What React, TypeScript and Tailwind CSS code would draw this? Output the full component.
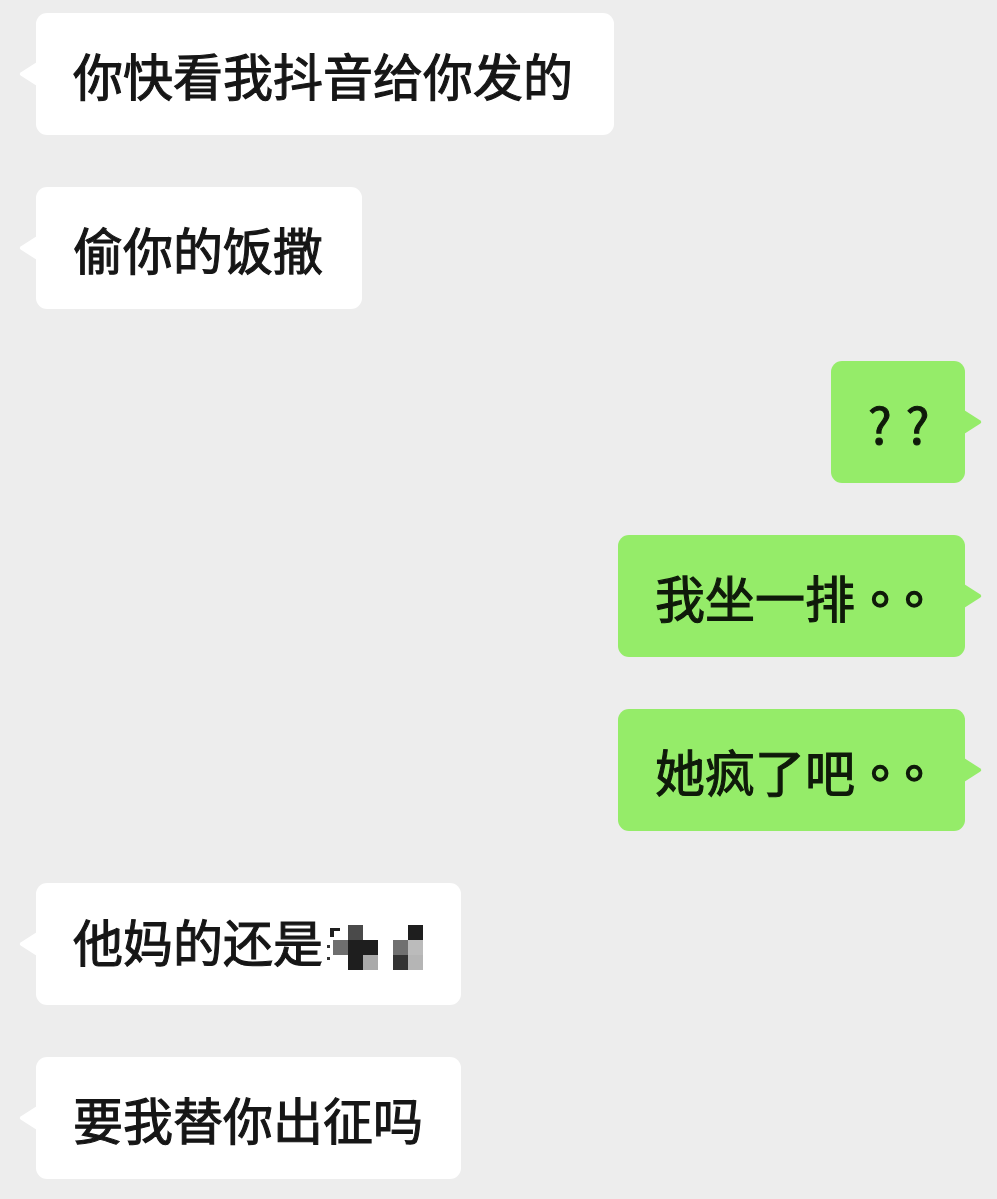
import React from "react";

const font = { fontFamily: '"Noto Sans CJK SC", "Noto Sans", sans-serif' };
const tcFont = { fontFamily: '"Noto Sans CJK TC", "Noto Sans CJK SC", sans-serif' };

function TailLeft() {
  return (
    <svg
      className="absolute left-[-18px] top-1/2 -translate-y-1/2"
      width="19"
      height="26"
      viewBox="0 0 19 26"
    >
      <path d="M19 1 L3 11.2 Q0.5 13 3 14.8 L19 25 Z" fill="#ffffff" />
    </svg>
  );
}

function TailRight() {
  return (
    <svg
      className="absolute right-[-18px] top-1/2 -translate-y-1/2"
      width="19"
      height="26"
      viewBox="0 0 19 26"
    >
      <path d="M0 1 L16 11.2 Q18.5 13 16 14.8 L0 25 Z" fill="#95ec69" />
    </svg>
  );
}

function Left({ children, w }: { children: React.ReactNode; w: string }) {
  return (
    <div className="flex justify-start pl-[36px]">
      <div
        className={`relative flex h-[122px] items-center rounded-[11px] bg-white pl-[37px] text-[50px] leading-none text-[#161616] ${w}`}
        style={font}
      >
        <TailLeft />
        <span className="whitespace-nowrap font-normal [-webkit-text-stroke:1.1px_#161616]">{children}</span>
      </div>
    </div>
  );
}

function Right({ children, w }: { children: React.ReactNode; w: string }) {
  return (
    <div className="flex justify-end pr-[32px]">
      <div
        className={`relative flex h-[122px] items-center rounded-[11px] bg-[#95ec69] pl-[37px] text-[50px] leading-none text-[#0f1a0a] ${w}`}
        style={font}
      >
        <TailRight />
        <span className="whitespace-nowrap font-normal [-webkit-text-stroke:1.1px_#0f1a0a]">{children}</span>
      </div>
    </div>
  );
}

function Dots() {
  return (
    <span style={tcFont} className="[-webkit-text-stroke:1.4px_#0f1a0a]">
      <span className="tracking-[-16px]">。</span>
      <span>。</span>
    </span>
  );
}

function Mosaic() {
  return (
    <svg width="100" height="50" viewBox="0 0 100 50" className="inline-block align-middle">
      <path d="M7 5 L17 5 L17 8 L11 8 L11 14 L7 14 Z" fill="#1e1e1e" />
      <rect x="4" y="22" width="3" height="3" fill="#333" />
      <rect x="4" y="34" width="3" height="3" fill="#333" />
      <rect x="25" y="2" width="15" height="15" fill="#4a4a4a" />
      <rect x="10" y="17" width="15" height="15" fill="#6e6e6e" />
      <rect x="25" y="17" width="15" height="15" fill="#1e1e1e" />
      <rect x="40" y="17" width="15" height="15" fill="#1e1e1e" />
      <rect x="25" y="32" width="15" height="15" fill="#1e1e1e" />
      <rect x="40" y="32" width="15" height="15" fill="#aaaaaa" />
      <rect x="85" y="2" width="15" height="15" fill="#1e1e1e" />
      <rect x="70" y="17" width="15" height="15" fill="#707070" />
      <rect x="85" y="17" width="15" height="15" fill="#bbbbbb" />
      <rect x="70" y="32" width="15" height="15" fill="#333333" />
      <rect x="85" y="32" width="15" height="15" fill="#b5b5b5" />
    </svg>
  );
}

export default function App() {
  return (
    <div className="flex min-h-[1199px] w-[997px] flex-col gap-[52px] overflow-hidden bg-[#ededed] pb-[20px] pt-[13px]">
      <Left w="w-[578px]">你快看我抖音给你发的</Left>
      <Left w="w-[326px]">偷你的饭撒</Left>
      <Right w="w-[134px]">
        <span className="tracking-[14px]">??</span>
      </Right>
      <Right w="w-[347px]">
        我坐一排
        <Dots />
      </Right>
      <Right w="w-[347px]">
        她疯了吧
        <Dots />
      </Right>
      <Left w="w-[425px]">
        他妈的还是
        <Mosaic />
      </Left>
      <Left w="w-[425px]">要我替你出征吗</Left>
    </div>
  );
}
